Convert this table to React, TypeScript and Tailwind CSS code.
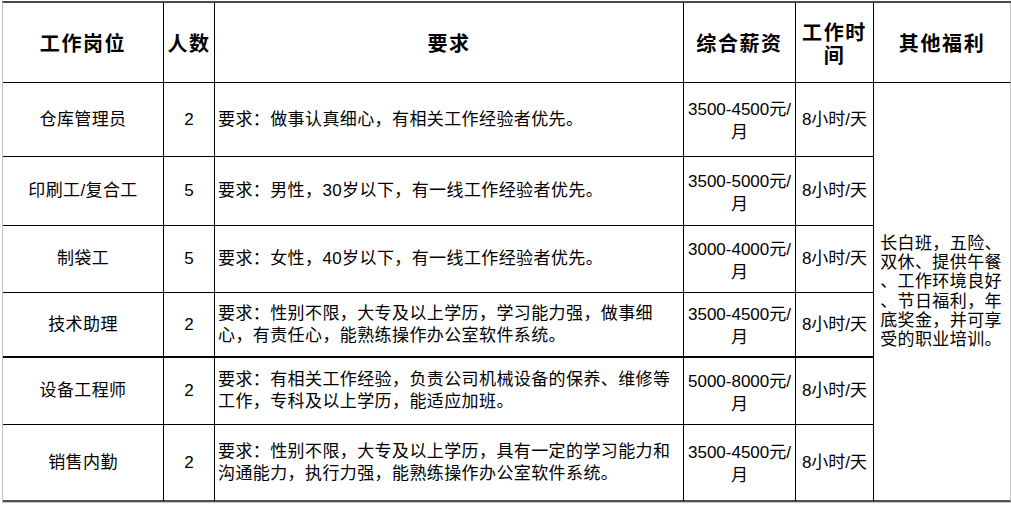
import React from "react";

const FONT = '"Liberation Sans", "Noto Sans CJK SC", sans-serif';
const CJK = '"Noto Sans CJK SC", sans-serif';

type Row = {
  name: string;
  count: string;
  desc: string[];
  salary: string;
  h: string;
  thick?: boolean;
  last?: boolean;
};

const rows: Row[] = [
  { name: "仓库管理员", count: "2", desc: ["要求：做事认真细心，有相关工作经验者优先。"], salary: "3500-4500", h: "h-[74px]" },
  { name: "印刷工/复合工", count: "5", desc: ["要求：男性，30岁以下，有一线工作经验者优先。"], salary: "3500-5000", h: "h-[69px]" },
  { name: "制袋工", count: "5", desc: ["要求：女性，40岁以下，有一线工作经验者优先。"], salary: "3000-4000", h: "h-[67px]" },
  {
    name: "技术助理",
    count: "2",
    desc: ["要求：性别不限，大专及以上学历，学习能力强，做事细", "心，有责任心，能熟练操作办公室软件系统。"],
    salary: "3500-4500",
    h: "h-[65px]",
    thick: true,
  },
  {
    name: "设备工程师",
    count: "2",
    desc: ["要求：有相关工作经验，负责公司机械设备的保养、维修等", "工作，专科及以上学历，能适应加班。"],
    salary: "5000-8000",
    h: "h-[67px]",
  },
  {
    name: "销售内勤",
    count: "2",
    desc: ["要求：性别不限，大专及以上学历，具有一定的学习能力和", "沟通能力，执行力强，能熟练操作办公室软件系统。"],
    salary: "3500-4500",
    h: "h-[77px]",
    last: true,
  },
];

const welfare = [
  "长白班，五险、",
  "双休、提供午餐",
  "、工作环境良好",
  "、节日福利，年",
  "底奖金，并可享",
  "受的职业培训。",
];

export default function App() {
  const head = "flex items-center justify-center border-r border-b border-black text-[20px] font-bold tracking-[1.6px] text-black";
  return (
    <div className="w-[1011px] h-[505px] bg-white pt-[1px] pl-[2px] overflow-hidden" style={{ fontFamily: FONT }}>
      <div className="flex w-[1009px] border-l border-l-[#c4c4c4] border-t-2 border-t-[#4a4a4a]">
        {/* left five columns */}
        <div className="flex flex-col w-[872px]">
          {/* header */}
          <div className="flex h-[80px]" style={{ fontFamily: CJK }}>
            <div className={`${head} w-[161px]`}>工作岗位</div>
            <div className={`${head} w-[51px] tracking-[0.5px]`}>人数</div>
            <div className={`${head} w-[469px]`}>要求</div>
            <div className={`${head} w-[112px]`}>综合薪资</div>
            <div className={`${head} w-[78px] flex-col leading-[23px]`}>
              <span>工作时</span>
              <span>间</span>
            </div>
          </div>
          {rows.map((r, i) => {
            const bb = r.last
              ? "border-b-2 border-b-[#4f4f4f]"
              : r.thick
              ? "border-b-2 border-b-black"
              : "border-b border-b-black";
            return (
              <div key={i} className={`flex ${r.h} text-[17px] text-black`}>
                <div className={`flex w-[161px] items-center justify-center border-r border-black ${bb} tracking-[0.4px]`}>
                  {r.name}
                </div>
                <div className={`flex w-[51px] items-center justify-center border-r border-black ${bb}`}>{r.count}</div>
                <div
                  className={`flex w-[469px] flex-col justify-center border-r border-black ${bb} pl-[3px] leading-[22px] tracking-[0.4px]`}
                >
                  {r.desc.map((d, j) => (
                    <span key={j} className="whitespace-nowrap">
                      {d}
                    </span>
                  ))}
                </div>
                <div
                  className={`flex w-[112px] flex-col items-center justify-center border-r border-black ${bb} pt-[3px] leading-[23px]`}
                >
                  <span className="whitespace-nowrap">{r.salary}元/</span>
                  <span>月</span>
                </div>
                <div className={`flex w-[78px] items-center justify-center border-r border-black ${bb} whitespace-nowrap`}>
                  8小时/天
                </div>
              </div>
            );
          })}
        </div>
        {/* welfare column */}
        <div className="flex flex-col w-[137px]">
          <div
            className="flex h-[80px] items-center justify-center border-r border-r-[#c4c4c4] border-b border-b-black text-[20px] font-bold tracking-[1.6px] text-black"
            style={{ fontFamily: CJK }}
          >
            其他福利
          </div>
          <div className="flex flex-1 flex-col justify-center border-r border-r-[#c4c4c4] border-b-2 border-b-[#4f4f4f] pl-[6px] text-[17px] leading-[19.3px] tracking-[0.4px] text-black">
            {welfare.map((w, i) => (
              <span key={i} className="whitespace-nowrap">
                {w}
              </span>
            ))}
          </div>
        </div>
      </div>
      <div className="h-[1px] w-[1009px] bg-[#c8c8c8]" />
    </div>
  );
}
